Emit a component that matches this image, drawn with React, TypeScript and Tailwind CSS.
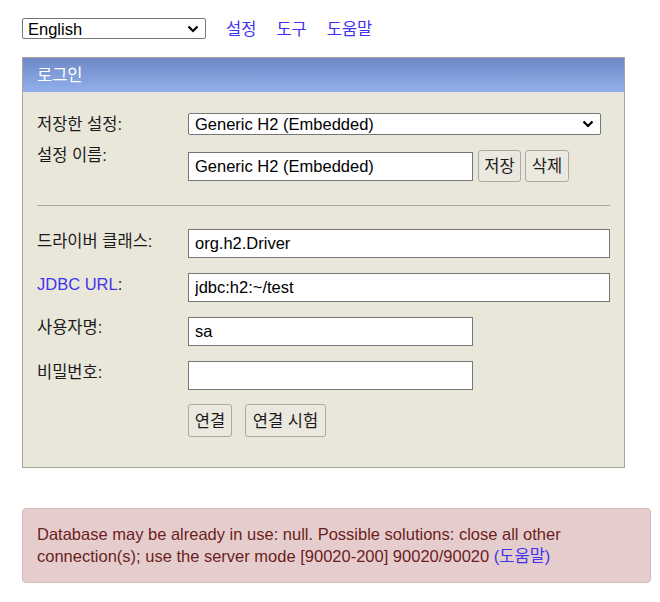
import React from "react";

const LINK = "text-[#3f33f0]";

function Label({ children, mt = 0, blue = false }: { children: React.ReactNode; mt?: number; blue?: boolean }) {
  return (
    <div
      className={`w-[151px] shrink-0 leading-[20px] ${blue ? LINK : "text-[#1a1a1a]"}`}
      style={{ marginTop: mt }}
    >
      {children}
    </div>
  );
}

function Chevron() {
  return (
    <svg
      className="pointer-events-none absolute right-[7px] top-1/2 -translate-y-1/2"
      width="12"
      height="8"
      viewBox="0 0 12 8"
    >
      <polyline points="1.5,1.5 6,6 10.5,1.5" fill="none" stroke="#000" strokeWidth="2.2" />
    </svg>
  );
}

function Select({ value, w, h, pl }: { value: string; w: string; h: string; pl: string }) {
  return (
    <div className={`relative shrink-0 ${w} ${h}`}>
      <select
        className={`block h-full w-full appearance-none rounded-[2px] border border-[#767676] bg-white ${pl} text-[16.5px] leading-[18px] text-black`}
      >
        <option>{value}</option>
      </select>
      <Chevron />
    </div>
  );
}

const inputCls =
  "h-[29px] border border-[#767676] bg-white px-[6px] text-[16.5px] text-black outline-none";
const btnCls =
  "flex items-center justify-center border border-[#acaaa0] rounded-[3px] bg-[#ebe9df] text-[16.5px] text-[#1a1a1a] leading-[20px]";

export default function App() {
  return (
    <div className="min-h-[602px] bg-white pt-[18px] pl-[22px] font-['Liberation_Sans','Noto_Sans_CJK_KR',sans-serif] text-[16.5px]">
      <div className="flex items-center">
        <Select value="English" w="w-[184px]" h="h-[21px]" pl="pl-[5px]" />
        <div className={`ml-[20px] flex gap-[20px] leading-[20px] ${LINK}`}>
          <span>설정</span>
          <span>도구</span>
          <span>도움말</span>
        </div>
      </div>

      <div className="mt-[18px] w-[603px] border border-[#a9a79b] bg-[#e9e7da]">
        <div className="flex h-[34px] items-center bg-gradient-to-b from-[#6f88c7] to-[#92b1ec] pl-[14px] leading-[20px] text-white">
          로그인
        </div>
        <div className="px-[14px] pt-[21px] pb-[30px]">
          {/* row 1 */}
          <div className="flex items-start">
            <Label mt={1}>저장한 설정:</Label>
            <Select value="Generic H2 (Embedded)" w="w-[413px]" h="h-[22px]" pl="pl-[6px]" />
          </div>
          {/* row 2 */}
          <div className="mt-[10px] flex items-start">
            <Label>설정 이름:</Label>
            <input className={`${inputCls} mt-[7px] w-[285px]`} defaultValue="Generic H2 (Embedded)" />
            <button className={`${btnCls} mt-[5px] ml-[5px] h-[32px] w-[43px]`}>저장</button>
            <button className={`${btnCls} mt-[5px] ml-[4px] h-[32px] w-[44px]`}>삭제</button>
          </div>
          <div className="mt-[23px] h-px w-[573px] bg-[#a9a79b]" />
          {/* row 3 */}
          <div className="mt-[23px] flex items-start">
            <Label mt={2}>드라이버 클래스:</Label>
            <input className={`${inputCls} w-[422px]`} defaultValue="org.h2.Driver" />
          </div>
          {/* row 4 */}
          <div className="mt-[15px] flex items-start">
            <Label mt={1} blue>
              JDBC URL<span className="text-[#1a1a1a]">:</span>
            </Label>
            <input className={`${inputCls} h-[28px] w-[422px]`} defaultValue="jdbc:h2:~/test" />
          </div>
          {/* row 5 */}
          <div className="mt-[15px] flex items-start">
            <Label>사용자명:</Label>
            <input className={`${inputCls} w-[285px]`} defaultValue="sa" />
          </div>
          {/* row 6 */}
          <div className="mt-[15px] flex items-start">
            <Label mt={1}>비밀번호:</Label>
            <input type="password" className={`${inputCls} w-[285px]`} defaultValue="" />
          </div>
          {/* row 7 */}
          <div className="mt-[14px] flex items-start">
            <div className="w-[151px] shrink-0" />
            <button className={`${btnCls} h-[33px] w-[44px]`}>연결</button>
            <button className={`${btnCls} ml-[13px] h-[33px] w-[81px]`}>연결 시험</button>
          </div>
        </div>
      </div>

      <div className="mt-[40px] w-[629px] rounded-[4px] border border-[#d7b9bb] bg-[#e6cdcd] px-[14px] pt-[14px] pb-[15px] leading-[22px] text-[#6b1d1d]">
        Database may be already in use: null. Possible solutions: close all other connection(s); use the server
        mode [90020-200] 90020/90020 <span className={LINK}>(도움말)</span>
      </div>
    </div>
  );
}
